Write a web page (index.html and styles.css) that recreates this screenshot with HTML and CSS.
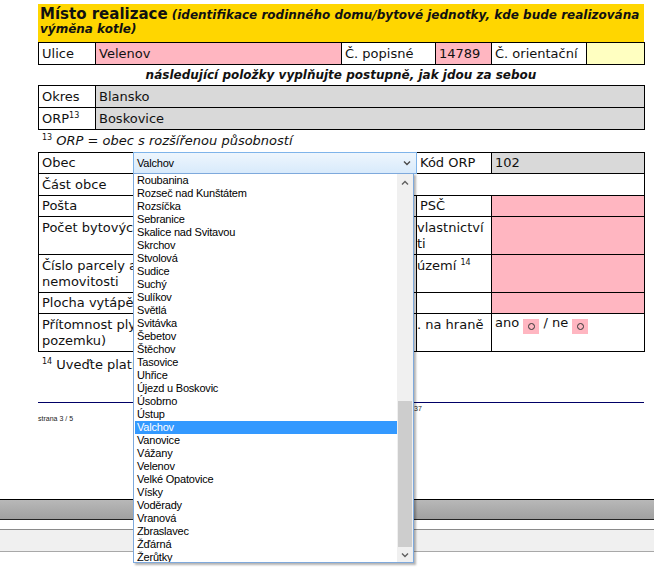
FILE: index.html
```html
<!DOCTYPE html>
<html lang="cs">
<head>
<meta charset="utf-8">
<title>Místo realizace</title>
<link rel="stylesheet" href="styles.css">
</head>
<body>
<div class="page">
  <div class="head"><span class="title">Místo realizace</span> <span class="sub">(identifikace rodinného domu/bytové jednotky, kde bude realizována výměna kotle)</span></div>

  <table class="grid t-ulice">
    <colgroup><col class="w57"><col class="w246"><col class="w94"><col class="w56"><col class="w95"><col class="w58"></colgroup>
    <tr class="r22">
      <td>Ulice</td><td class="pink">Velenov</td><td>Č. popisné</td><td class="pink">14789</td><td>Č. orientační</td><td class="lyellow"></td>
    </tr>
  </table>

  <div class="note">následující položky vyplňujte postupně, jak jdou za sebou</div>

  <table class="grid">
    <colgroup><col class="w57"><col class="w549"></colgroup>
    <tr class="r22"><td>Okres</td><td class="gray">Blansko</td></tr>
    <tr class="r22"><td>ORP<sup class="sup">13</sup></td><td class="gray">Boskovice</td></tr>
  </table>

  <div class="fn"><sup class="sup">13</sup> <i>ORP = obec s rozšířenou působností</i></div>

  <table class="grid main">
    <colgroup><col class="w95"><col class="w283"><col class="w75"><col class="w153"></colgroup>
    <tr class="r21">
      <td>Obec</td>
      <td class="combo">
        <div class="select">
          <span class="sel-text">Valchov</span>
          <svg class="chev" width="8" height="6" viewBox="0 0 8 6"><polyline points="1,1.5 4,4.5 7,1.5" fill="none" stroke="#4a4a4a" stroke-width="1.4"/></svg>
          <div class="popup">
            <div class="list">
              <div class="item">Roubanina</div>
              <div class="item">Rozseč nad Kunštátem</div>
              <div class="item">Rozsíčka</div>
              <div class="item">Sebranice</div>
              <div class="item">Skalice nad Svitavou</div>
              <div class="item">Skrchov</div>
              <div class="item">Stvolová</div>
              <div class="item">Sudice</div>
              <div class="item">Suchý</div>
              <div class="item">Sulíkov</div>
              <div class="item">Světlá</div>
              <div class="item">Svitávka</div>
              <div class="item">Šebetov</div>
              <div class="item">Štěchov</div>
              <div class="item">Tasovice</div>
              <div class="item">Uhřice</div>
              <div class="item">Újezd u Boskovic</div>
              <div class="item">Úsobrno</div>
              <div class="item">Ústup</div>
              <div class="item selected">Valchov</div>
              <div class="item">Vanovice</div>
              <div class="item">Vážany</div>
              <div class="item">Velenov</div>
              <div class="item">Velké Opatovice</div>
              <div class="item">Vísky</div>
              <div class="item">Voděrady</div>
              <div class="item">Vranová</div>
              <div class="item">Zbraslavec</div>
              <div class="item">Žďárná</div>
              <div class="item">Žerůtky</div>
            </div>
            <div class="sb">
              <div class="sb-btn"><svg width="8" height="6" viewBox="0 0 8 6"><polyline points="1,4.5 4,1.5 7,4.5" fill="none" stroke="#606060" stroke-width="1.4"/></svg></div>
              <div class="sb-track"></div>
              <div class="sb-thumb"></div>
              <div class="sb-btn down"><svg width="8" height="6" viewBox="0 0 8 6"><polyline points="1,1.5 4,4.5 7,1.5" fill="none" stroke="#606060" stroke-width="1.4"/></svg></div>
            </div>
          </div>
        </div>
      </td>
      <td>Kód ORP</td>
      <td class="gray">102</td>
    </tr>
    <tr class="r22"><td>Část obce</td><td colspan="3"></td></tr>
    <tr class="r21"><td>Pošta</td><td></td><td>PSČ</td><td class="pink"></td></tr>
    <tr class="r38"><td colspan="2" class="top">Počet bytových jednotek v budově</td><td class="mid">vlastnictví<br>ti</td><td class="pink"></td></tr>
    <tr class="r38"><td colspan="2">Číslo parcely a katastrální<br>nemovitosti</td><td class="mid">území <sup class="sup">14</sup><br>&nbsp;</td><td class="pink"></td></tr>
    <tr class="r21"><td colspan="2">Plocha vytápěné části</td><td></td><td class="pink"></td></tr>
    <tr class="r38"><td colspan="2">Přítomnost plynové přípojky (na<br>pozemku)</td><td class="mid">. na hraně<br>&nbsp;</td><td class="opts">ano <span class="opt"><span class="ring"></span></span> / ne <span class="opt"><span class="ring"></span></span><br>&nbsp;</td></tr>
  </table>

  <div class="fn2"><sup class="sup">14</sup> Uveďte platný název území</div>

  <div class="foot">
    <span class="strana">strana 3 / 5</span>
    <span class="num">37</span>
  </div>
</div>

<div class="band-dark"></div>
<div class="band-light"></div>
</body>
</html>
```

FILE: styles.css
```css
* { box-sizing: border-box; }

html { min-height: 100%; }

body {
  margin: 0;
  min-height: 567px;
  background: #fff;
  font-family: "DejaVu Sans", Verdana, sans-serif;
  font-size: 13px;
  color: #111;
}

.page {
  width: 606px;
  margin-left: 38px;
  padding-top: 4px;
  height: 499px;
}

.head {
  background: #FFD600;
  height: 38px;
  padding: 3px 2px 0 2px;
  line-height: 14px;
}
.title { font-weight: bold; font-size: 15px; }
.sub { font-weight: bold; font-style: italic; font-size: 12px; }

table.grid {
  border-collapse: collapse;
  table-layout: fixed;
  width: 606px;
}
.grid td {
  border: 1px solid #000;
  padding: 0 3px;
  line-height: 16px;
  vertical-align: middle;
  white-space: nowrap;
  overflow: visible;
}
.grid td.top {
  vertical-align: top;
  padding-top: 3px;
}
.r22 td { height: 22px; }
.r21 td { height: 21px; }
.r38 td { height: 38px; }

.w57 { width: 57px; }
.w246 { width: 246px; }
.w94 { width: 94px; }
.w56 { width: 56px; }
.w95 { width: 95px; }
.w58 { width: 58px; }
.w549 { width: 549px; }
.w283 { width: 283px; }
.w75 { width: 75px; }
.w153 { width: 153px; }

.pink { background: #FFB6C1; }
.gray { background: #D9D9D9; }
.lyellow { background: #FFFFC1; }

.sup {
  font-size: 8px;
  line-height: 0;
  vertical-align: 5px;
}

.note {
  height: 20px;
  text-align: center;
  font-weight: bold;
  font-style: italic;
  font-size: 12px;
  line-height: 21px;
}

.fn {
  height: 22px;
  line-height: 22px;
  padding-left: 4px;
  font-size: 13px;
}

.grid td.mid { padding-left: 0; }

.opt {
  display: inline-flex;
  align-items: center;
  justify-content: center;
  width: 16px;
  height: 15px;
  background: #FFB6C1;
  vertical-align: -3px;
}
.ring {
  width: 7px;
  height: 7px;
  border: 1px solid #333;
  border-radius: 50%;
}

/* combo box */
.grid td.combo { padding: 0; }
.select {
  position: relative;
  height: 22px;
  margin: -1px;
  border: 1px solid #7EB4EA;
  background: linear-gradient(#EEF6FD, #D8EAFB);
  display: flex;
  align-items: center;
  padding: 0 5px 0 3px;
  font-family: "Liberation Sans", Arial, sans-serif;
  font-size: 11px;
  letter-spacing: -0.2px;
  color: #000;
}
.sel-text { flex: 1; }
.chev { display: block; }

.popup {
  position: absolute;
  left: -1px;
  top: 20px;
  width: 281px;
  height: 390px;
  border: 1px solid #7EA9DC;
  background: #fff;
  box-shadow: 2px 2px 2px rgba(0, 0, 0, 0.3);
  display: flex;
  z-index: 5;
}
.list {
  flex: 1;
  overflow: hidden;
  padding-left: 1px;
}
.item {
  height: 13px;
  line-height: 13px;
  padding-left: 2px;
}
.item.selected {
  background: #3399FF;
  color: #fff;
}
.sb {
  width: 16px;
  display: flex;
  flex-direction: column;
  background: #F0F0F0;
}
.sb-btn {
  height: 17px;
  flex: none;
  display: flex;
  align-items: center;
  justify-content: center;
}
.sb-btn.down { height: 15px; }
.sb-btn svg { display: block; }
.sb-track { height: 210px; flex: none; }
.sb-thumb {
  height: 146px;
  flex: none;
  margin: 0 1px;
  background: #CDCDCD;
}

.fn2 {
  padding: 5px 0 0 4px;
  line-height: 16px;
}

.foot {
  margin-top: 29px;
  border-top: 1px solid #000066;
  display: grid;
  grid-template-columns: 376px 1fr;
  font-family: "Liberation Sans", Arial, sans-serif;
  font-size: 7px;
  line-height: 8px;
  color: #222;
}
.strana { padding-top: 12px; }
.num { padding-top: 2px; }

.band-dark {
  height: 21px;
  border-top: 1px solid #000;
  border-bottom: 1px solid #222;
  background: linear-gradient(#B8B8B8, #A0A0A0);
}
.band-light {
  margin-top: 9px;
  height: 23px;
  border-top: 1px solid #8C8C8C;
  border-bottom: 1px solid #A8A8A8;
  background: #F0F0F0;
}
```
